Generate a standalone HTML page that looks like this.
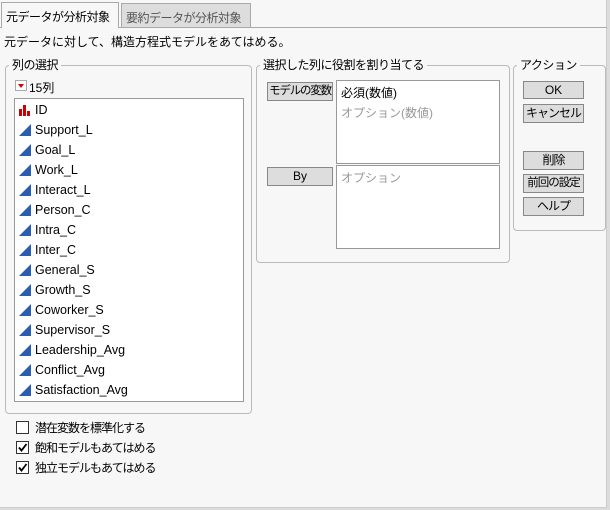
<!DOCTYPE html>
<html><head><meta charset="utf-8"><style>
*{margin:0;padding:0;box-sizing:border-box}
body{width:610px;height:510px;background:#dcdcdc;font-family:"Liberation Sans","Noto Sans CJK JP",sans-serif;font-size:12px;color:#000;position:relative;overflow:hidden}
.a{position:absolute}
.panel{left:0;top:0;width:607px;height:508px;background:#f7f7f7;border-right:1px solid #ccc;border-bottom:1px solid #ccc}
.tab{height:25px;border:1px solid #aaa;border-bottom:none;padding:5px 4px 0;white-space:nowrap;letter-spacing:-0.5px}
.grp{border:1px solid #bbb;border-radius:4px}
.lbl{background:#f7f7f7;padding:0 3px;white-space:nowrap;line-height:14px;letter-spacing:-0.5px}
.box{background:#fff;border:1px solid #999}
.btn{background:#ddd;border:1px solid #888;text-align:center;line-height:16px;white-space:nowrap;letter-spacing:-1px;overflow:hidden}
.it{position:absolute;left:4px;height:20px;line-height:20px;white-space:nowrap;font-size:12.5px}
.it svg{vertical-align:-2px;margin-right:4px}
.cb{width:13px;height:13px;border:1px solid #333;background:#fff}
.ct{letter-spacing:-1px}
</style></head><body>
<div class="a panel"></div>
<div class="a" style="left:0;top:27px;width:607px;height:1px;background:#aaa"></div>
<div class="a tab" style="left:1px;top:2px;width:118px;height:26px;background:#f7f7f7">元データが分析対象</div>
<div class="a tab" style="left:121px;top:3px;width:130px;height:24px;background:#ddd;color:#555">要約データが分析対象</div>
<div class="a" style="left:4px;top:33px;white-space:nowrap">元データに対して、構造方程式モデルをあてはめる。</div>

<div class="a grp" style="left:5px;top:65px;width:247px;height:349px"></div>
<div class="a lbl" style="left:9px;top:58px">列の選択</div>
<div class="a" style="left:15px;top:80px;width:12px;height:11px;border:1px solid #aaa;background:#fff"><div style="position:absolute;left:2px;top:3px;border-left:3px solid transparent;border-right:3px solid transparent;border-top:4px solid #d00"></div></div>
<div class="a" style="left:29px;top:79px">15列</div>
<div class="a box" style="left:14px;top:98px;width:230px;height:304px">
<div class="it" style="top:1px"><svg width="12" height="12"><rect x="0" y="5" width="3" height="7" fill="#c00"/><rect x="4" y="1" width="3" height="11" fill="#c00"/><rect x="8" y="7" width="3" height="5" fill="#c00"/></svg>ID</div>
<div class="it" style="top:21px"><svg width="12" height="12"><polygon points="0,12 12,0 12,12" fill="#2a5db0"/></svg>Support_L</div>
<div class="it" style="top:41px"><svg width="12" height="12"><polygon points="0,12 12,0 12,12" fill="#2a5db0"/></svg>Goal_L</div>
<div class="it" style="top:61px"><svg width="12" height="12"><polygon points="0,12 12,0 12,12" fill="#2a5db0"/></svg>Work_L</div>
<div class="it" style="top:81px"><svg width="12" height="12"><polygon points="0,12 12,0 12,12" fill="#2a5db0"/></svg>Interact_L</div>
<div class="it" style="top:101px"><svg width="12" height="12"><polygon points="0,12 12,0 12,12" fill="#2a5db0"/></svg>Person_C</div>
<div class="it" style="top:121px"><svg width="12" height="12"><polygon points="0,12 12,0 12,12" fill="#2a5db0"/></svg>Intra_C</div>
<div class="it" style="top:141px"><svg width="12" height="12"><polygon points="0,12 12,0 12,12" fill="#2a5db0"/></svg>Inter_C</div>
<div class="it" style="top:161px"><svg width="12" height="12"><polygon points="0,12 12,0 12,12" fill="#2a5db0"/></svg>General_S</div>
<div class="it" style="top:181px"><svg width="12" height="12"><polygon points="0,12 12,0 12,12" fill="#2a5db0"/></svg>Growth_S</div>
<div class="it" style="top:201px"><svg width="12" height="12"><polygon points="0,12 12,0 12,12" fill="#2a5db0"/></svg>Coworker_S</div>
<div class="it" style="top:221px"><svg width="12" height="12"><polygon points="0,12 12,0 12,12" fill="#2a5db0"/></svg>Supervisor_S</div>
<div class="it" style="top:241px"><svg width="12" height="12"><polygon points="0,12 12,0 12,12" fill="#2a5db0"/></svg>Leadership_Avg</div>
<div class="it" style="top:261px"><svg width="12" height="12"><polygon points="0,12 12,0 12,12" fill="#2a5db0"/></svg>Conflict_Avg</div>
<div class="it" style="top:281px"><svg width="12" height="12"><polygon points="0,12 12,0 12,12" fill="#2a5db0"/></svg>Satisfaction_Avg</div>
</div>

<div class="a grp" style="left:256px;top:65px;width:254px;height:198px"></div>
<div class="a lbl" style="left:260px;top:58px">選択した列に役割を割り当てる</div>
<div class="a btn" style="left:267px;top:82px;width:66px;height:19px;font-size:11.5px;letter-spacing:-1.2px">モデルの変数</div>
<div class="a box" style="left:336px;top:80px;width:164px;height:84px;padding:2px 4px;line-height:20px">必須(数値)<br><span style="color:#999">オプション(数値)</span></div>
<div class="a btn" style="left:267px;top:167px;width:66px;height:19px;letter-spacing:0">By</div>
<div class="a box" style="left:336px;top:165px;width:164px;height:84px;padding:2px 4px;line-height:20px;color:#999">オプション</div>

<div class="a grp" style="left:513px;top:65px;width:93px;height:166px"></div>
<div class="a lbl" style="left:517px;top:58px">アクション</div>
<div class="a btn" style="left:523px;top:81px;width:61px;height:18px;letter-spacing:0">OK</div>
<div class="a btn" style="left:523px;top:104px;width:61px;height:19px">キャンセル</div>
<div class="a btn" style="left:523px;top:151px;width:61px;height:19px">削除</div>
<div class="a btn" style="left:523px;top:174px;width:61px;height:19px;font-size:11.5px">前回の設定</div>
<div class="a btn" style="left:523px;top:197px;width:61px;height:19px">ヘルプ</div>

<div class="a cb" style="left:16px;top:421px"></div>
<div class="a ct" style="left:35px;top:419px">潜在変数を標準化する</div>
<div class="a cb" style="left:16px;top:441px"><svg width="11" height="11" style="position:absolute;left:0;top:0"><path d="M2 5.5 L4.5 8.5 L9.5 2" stroke="#000" stroke-width="1.8" fill="none"/></svg></div>
<div class="a ct" style="left:35px;top:439px">飽和モデルもあてはめる</div>
<div class="a cb" style="left:16px;top:461px"><svg width="11" height="11" style="position:absolute;left:0;top:0"><path d="M2 5.5 L4.5 8.5 L9.5 2" stroke="#000" stroke-width="1.8" fill="none"/></svg></div>
<div class="a ct" style="left:35px;top:459px">独立モデルもあてはめる</div>
</body></html>
